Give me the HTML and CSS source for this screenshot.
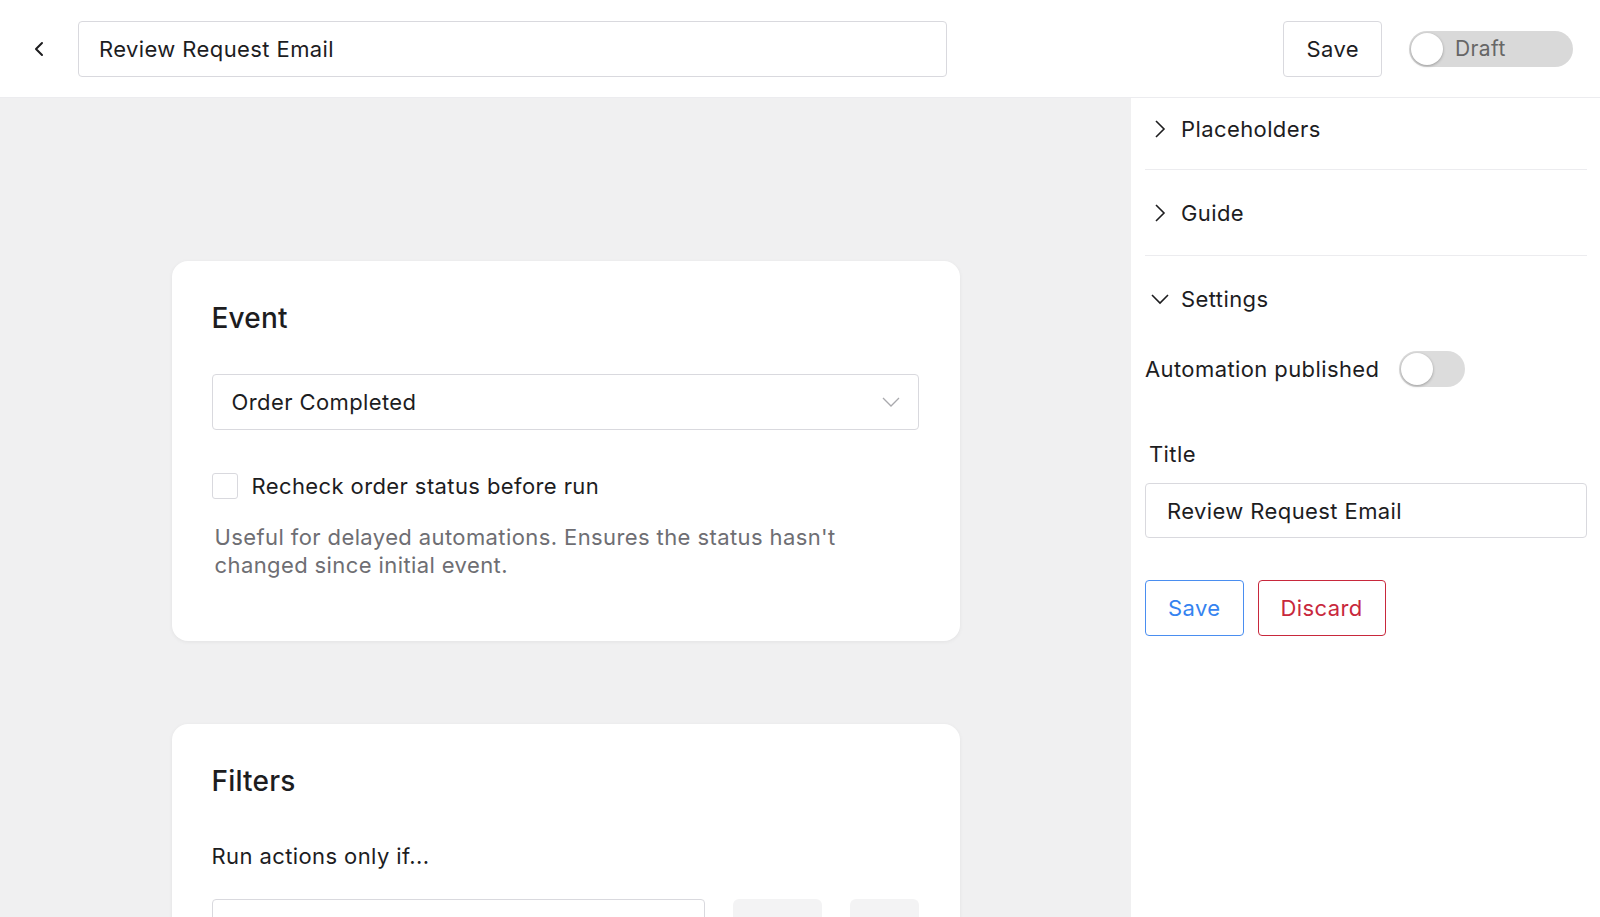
FILE: index.html
```html
<!DOCTYPE html>
<html lang="en">
<head>
    <meta charset="UTF-8">
    <title>Review Request Email</title>
    <link rel="stylesheet" href="styles.css">
</head>
<body>
    <div class="topbar">
        <button class="back-button" aria-label="Back">
            <svg width="12" height="16" viewBox="0 0 12 16"><path d="M9 2 L3 8 L9 14" fill="none" stroke="#1d1d1f" stroke-width="2" stroke-linecap="round" stroke-linejoin="round"/></svg>
        </button>
        <div class="name-input">Review Request Email</div>
        <div class="topbar-actions">
            <button class="btn">Save</button>
            <div class="status-toggle">
                <span class="knob"></span>
                <span class="status-label">Draft</span>
            </div>
        </div>
    </div>

    <div class="workspace">
        <div class="canvas">
            <div class="card">
                <h2 class="card-title">Event</h2>
                <div class="select">
                    <span>Order Completed</span>
                    <svg width="18" height="10" viewBox="0 0 18 10"><path d="M1 1 L9 9 L17 1" fill="none" stroke="#a9a9ad" stroke-width="1.3"/></svg>
                </div>
                <label class="check-row">
                    <span class="checkbox"></span>
                    <span>Recheck order status before run</span>
                </label>
                <p class="help-text">Useful for delayed automations. Ensures the status hasn't changed since initial event.</p>
            </div>

            <div class="card">
                <h2 class="card-title">Filters</h2>
                <p class="card-text">Run actions only if...</p>
                <div class="filter-row">
                    <div class="filter-input"></div>
                    <div class="filter-chip wide"></div>
                    <div class="filter-chip"></div>
                </div>
            </div>
        </div>

        <div class="sidebar">
            <div class="acc-row first">
                <svg class="chev" width="14" height="20" viewBox="0 0 14 20"><path d="M3 2 L11 10 L3 18" fill="none" stroke="#1d1d1f" stroke-width="1.6"/></svg>
                <span>Placeholders</span>
            </div>
            <div class="acc-row">
                <svg class="chev" width="14" height="20" viewBox="0 0 14 20"><path d="M3 2 L11 10 L3 18" fill="none" stroke="#1d1d1f" stroke-width="1.6"/></svg>
                <span>Guide</span>
            </div>
            <div class="acc-row open">
                <svg class="chev" width="20" height="14" viewBox="0 0 20 14"><path d="M2 3 L10 11 L18 3" fill="none" stroke="#1d1d1f" stroke-width="1.6"/></svg>
                <span>Settings</span>
            </div>

            <div class="settings">
                <div class="setting-line">
                    <span>Automation published</span>
                    <span class="switch"><span class="knob"></span></span>
                </div>

                <div class="field-label">Title</div>
                <div class="text-input">Review Request Email</div>

                <div class="form-actions">
                    <button class="btn btn-primary">Save</button>
                    <button class="btn btn-danger">Discard</button>
                </div>
            </div>
        </div>
    </div>
</body>
</html>
```

FILE: styles.css
```css
* {
    margin: 0;
    padding: 0;
    box-sizing: border-box;
}

body {
    font-family: Inter, 'Noto Sans', sans-serif;
    color: #1d1d1f;
    font-size: 22px;
    letter-spacing: 0.4px;
    background: #fff;
    height: 917px;
    overflow: hidden;
}

button {
    font-family: inherit;
    font-size: inherit;
    letter-spacing: inherit;
    background: none;
    border: none;
    color: inherit;
    cursor: pointer;
}

/* top bar */
.topbar {
    height: 98px;
    display: flex;
    align-items: center;
    padding: 0 27px 0 28px;
    border-bottom: 1px solid #ececef;
}

.back-button {
    width: 22px;
    height: 22px;
    display: flex;
    align-items: center;
    justify-content: center;
    margin-right: 28px;
}

.name-input {
    width: 869px;
    height: 56px;
    border: 1px solid #d9d9de;
    border-radius: 4px;
    padding: 0 20px;
    display: flex;
    align-items: center;
    font-size: 22px;
}

.topbar-actions {
    margin-left: auto;
    display: flex;
    align-items: center;
    gap: 27px;
}

.btn {
    height: 56px;
    padding: 0 22px;
    border: 1px solid #d9d9de;
    border-radius: 4px;
    background: #fff;
    font-size: 22px;
    color: #1d1d1f;
}

.status-toggle {
    position: relative;
    width: 164px;
    height: 36px;
    border-radius: 18px;
    background: #d9d9d9;
    display: flex;
    align-items: center;
    padding-left: 46px;
}

.status-label {
    color: #666;
    font-size: 21px;
}

.knob {
    position: absolute;
    left: 2px;
    top: 2px;
    width: 32px;
    height: 32px;
    border-radius: 50%;
    background: #fff;
    box-shadow: 0 1px 3px rgba(0, 0, 0, 0.3);
}

/* main area */
.workspace {
    display: grid;
    grid-template-columns: 1131px 1fr;
    height: 819px;
}

.canvas {
    background: #f0f0f1;
    padding-top: 163px;
    display: flex;
    flex-direction: column;
    align-items: center;
    gap: 83px;
    overflow: hidden;
}

.card {
    width: 788px;
    background: #fff;
    border-radius: 16px;
    padding: 40px 41px 62px 40px;
    box-shadow: 0 1px 4px rgba(0, 0, 0, 0.06);
    flex-shrink: 0;
}

.card-title {
    font-size: 28px;
    font-weight: 500;
    line-height: 34px;
    letter-spacing: 0.2px;
}

.select {
    margin-top: 39px;
    height: 56px;
    border: 1px solid #d9d9de;
    border-radius: 4px;
    padding: 0 18px 0 19px;
    display: flex;
    align-items: center;
    justify-content: space-between;
}

.check-row {
    margin-top: 43px;
    display: flex;
    align-items: center;
    gap: 14px;
    line-height: 26px;
}

.checkbox {
    width: 26px;
    height: 26px;
    border: 1px solid #d9d9de;
    border-radius: 3px;
}

.help-text {
    margin-top: 24px;
    padding-left: 3px;
    color: #6e6e73;
    line-height: 28px;
    width: 660px;
}

.card-text {
    margin-top: 43px;
    line-height: 30px;
}

.filter-row {
    margin-top: 28px;
    display: flex;
    gap: 28px;
}

.filter-input {
    width: 493px;
    height: 56px;
    border: 1px solid #d9d9de;
    border-radius: 4px;
}

.filter-chip {
    width: 69px;
    height: 56px;
    border-radius: 6px;
    background: #f3f3f4;
}

.filter-chip.wide {
    width: 89px;
}

/* sidebar */
.sidebar {
    padding: 0 13px 0 14px;
    background: #fff;
}

.acc-row {
    height: 86px;
    display: flex;
    align-items: center;
    gap: 14px;
    border-bottom: 1px solid #ececef;
    padding-left: 8px;
}

.acc-row.first {
    height: 72px;
    padding-bottom: 10px;
}

.acc-row.open {
    border-bottom: none;
    padding-left: 5px;
    gap: 11px;
}

.settings {
    padding-top: 9px;
}

.setting-line {
    display: flex;
    align-items: center;
    gap: 20px;
    height: 36px;
}

.switch {
    position: relative;
    width: 66px;
    height: 36px;
    border-radius: 18px;
    background: #dcdcdc;
}

.field-label {
    margin-top: 52px;
    padding-left: 4px;
    line-height: 30px;
}

.text-input {
    margin-top: 14px;
    height: 55px;
    border: 1px solid #d9d9de;
    border-radius: 4px;
    padding: 0 21px;
    display: flex;
    align-items: center;
}

.form-actions {
    margin-top: 42px;
    display: flex;
    gap: 14px;
}

.btn-primary {
    border-color: #4a8ef0;
    color: #3583f0;
}

.btn-danger {
    border-color: #c8283c;
    color: #c8283c;
}
```
